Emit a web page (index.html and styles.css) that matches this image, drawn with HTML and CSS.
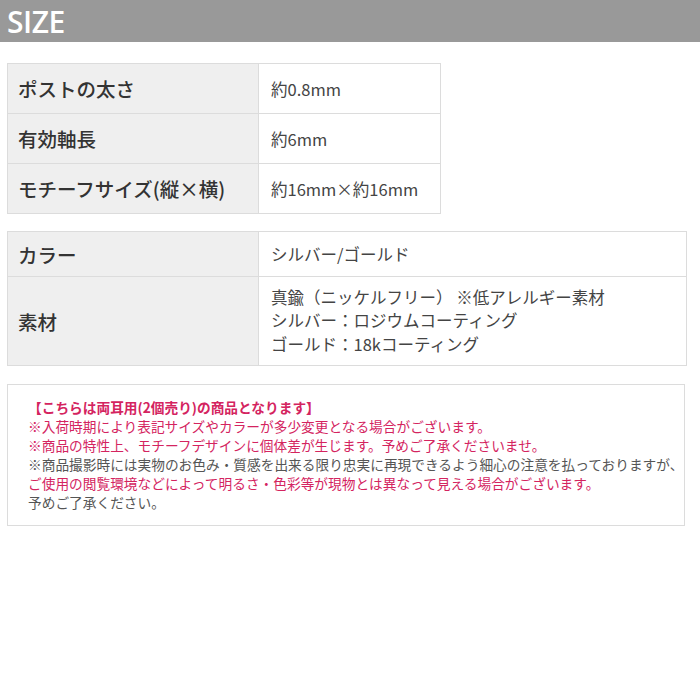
FILE: index.html
```html
<!DOCTYPE html>
<html lang="ja">
<head>
    <meta charset="UTF-8">
    <title>SIZE</title>
    <link rel="stylesheet" href="styles.css">
</head>
<body>
    <div class="page-header">SIZE</div>

    <table class="spec-table spec-small">
        <tr>
            <th>ポストの太さ</th>
            <td>約0.8mm</td>
        </tr>
        <tr>
            <th>有効軸長</th>
            <td>約6mm</td>
        </tr>
        <tr>
            <th>モチーフサイズ(縦×横)</th>
            <td>約16mm×約16mm</td>
        </tr>
    </table>

    <table class="spec-table spec-wide">
        <tr class="row-color">
            <th>カラー</th>
            <td>シルバー/ゴールド</td>
        </tr>
        <tr class="row-material">
            <th>素材</th>
            <td>
                真鍮（ニッケルフリー） ※低アレルギー素材<br>
                シルバー：ロジウムコーティング<br>
                ゴールド：18kコーティング
            </td>
        </tr>
    </table>

    <div class="notice">
        <p class="pink strong">【こちらは両耳用(2個売り)の商品となります】</p>
        <p class="pink">※入荷時期により表記サイズやカラーが多少変更となる場合がございます。</p>
        <p class="pink">※商品の特性上、モチーフデザインに個体差が生じます。予めご了承くださいませ。</p>
        <p>※商品撮影時には実物のお色み・質感を出来る限り忠実に再現できるよう細心の注意を払っておりますが、</p>
        <p class="pink">ご使用の閲覧環境などによって明るさ・色彩等が現物とは異なって見える場合がございます。</p>
        <p>予めご了承ください。</p>
    </div>
</body>
</html>
```

FILE: styles.css
```css
body {
    margin: 0;
    padding: 0;
    background-color: #ffffff;
    font-family: "Noto Sans CJK JP", "Noto Sans", sans-serif;
    color: #333;
}

.page-header {
    height: 42px;
    line-height: 44px;
    background-color: #999999;
    color: #ffffff;
    font-family: "Open Sans", "Noto Sans", sans-serif;
    font-weight: 600;
    font-size: 30px;
    padding-left: 7px;
    letter-spacing: -0.5px;
}

.spec-table {
    border-collapse: collapse;
    margin-left: 7px;
}

.spec-table th,
.spec-table td {
    border: 1px solid #dcdcdc;
    text-align: left;
    vertical-align: middle;
    padding: 0 0 0 10px;
}

.spec-table th {
    width: 240px;
    background-color: #efefef;
    font-size: 19.5px;
    font-weight: 500;
    color: #333;
}

.spec-table td {
    font-size: 16.5px;
    color: #444;
    padding-left: 12px;
}

.spec-small {
    margin-top: 21px;
    width: 434px;
}

.spec-small tr {
    height: 50px;
}

.spec-wide {
    margin-top: 17px;
    width: 680px;
}

.row-color {
    height: 45px;
}

.row-material {
    height: 89px;
}

.row-material td {
    line-height: 23.5px;
}

.notice {
    margin: 18px 0 0 7px;
    width: 678px;
    height: 142px;
    box-sizing: border-box;
    border: 1px solid #dcdcdc;
    padding: 13px 0 0 20px;
    font-size: 13.7px;
    line-height: 19px;
    color: #555;
}

.notice p {
    margin: 0;
    white-space: nowrap;
}

.notice .pink {
    color: #d4245f;
}

.notice .strong {
    font-weight: 700;
}
```
